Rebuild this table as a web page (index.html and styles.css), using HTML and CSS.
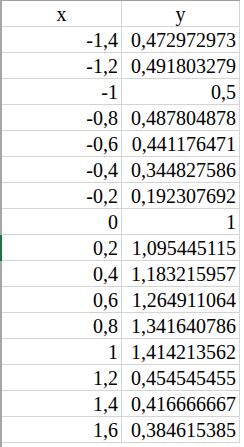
FILE: index.html
```html
<!DOCTYPE html>
<html>
<head>
<meta charset="utf-8">
<link rel="stylesheet" href="styles.css">
</head>
<body>
<div class="page">
  <div class="sheet">
    <div class="row head"><div class="cell a">x</div><div class="cell b">y</div></div>
    <div class="row"><div class="cell a">-1,4</div><div class="cell b">0,472972973</div></div>
    <div class="row"><div class="cell a">-1,2</div><div class="cell b">0,491803279</div></div>
    <div class="row"><div class="cell a">-1</div><div class="cell b">0,5</div></div>
    <div class="row"><div class="cell a">-0,8</div><div class="cell b">0,487804878</div></div>
    <div class="row"><div class="cell a">-0,6</div><div class="cell b">0,441176471</div></div>
    <div class="row"><div class="cell a">-0,4</div><div class="cell b">0,344827586</div></div>
    <div class="row"><div class="cell a">-0,2</div><div class="cell b">0,192307692</div></div>
    <div class="row"><div class="cell a">0</div><div class="cell b">1</div></div>
    <div class="row selected"><div class="cell a">0,2</div><div class="cell b">1,095445115</div></div>
    <div class="row"><div class="cell a">0,4</div><div class="cell b">1,183215957</div></div>
    <div class="row"><div class="cell a">0,6</div><div class="cell b">1,264911064</div></div>
    <div class="row"><div class="cell a">0,8</div><div class="cell b">1,341640786</div></div>
    <div class="row"><div class="cell a">1</div><div class="cell b">1,414213562</div></div>
    <div class="row"><div class="cell a">1,2</div><div class="cell b">0,454545455</div></div>
    <div class="row"><div class="cell a">1,4</div><div class="cell b">0,416666667</div></div>
    <div class="row"><div class="cell a">1,6</div><div class="cell b">0,384615385</div></div>
  </div>
  <div class="filler"></div>
</div>
</body>
</html>
```
FILE: styles.css
```css
html, body {
  margin: 0;
  padding: 0;
  background: #ffffff;
}
.page {
  display: flex;
  flex-direction: column;
  height: 447px;
  width: 244px;
  overflow: hidden;
  font-family: "Liberation Serif", "Times New Roman", serif;
  font-size: 20px;
  color: #000000;
}
.sheet {
  display: flex;
  flex-direction: column;
  width: 240px;
  border-top: 1px solid #9f9f9f;
}
.row {
  display: flex;
  height: 26px;
  border-left: 2px solid #a6a6a6;
}
.row.selected {
  border-left-color: #217346;
}
.cell {
  box-sizing: border-box;
  height: 26px;
  border-right: 1px solid #d4d4d4;
  border-bottom: 1px solid #d4d4d4;
  display: flex;
  align-items: flex-end;
  justify-content: flex-end;
  line-height: 23px;
  padding-right: 3px;
  white-space: nowrap;
}
.cell.a {
  width: 120px;
}
.cell.b {
  width: 118px;
}
.head .cell {
  justify-content: center;
  padding-right: 0;
}
.filler {
  flex: 1;
  width: 0;
  border-left: 2px solid #a6a6a6;
}
```
